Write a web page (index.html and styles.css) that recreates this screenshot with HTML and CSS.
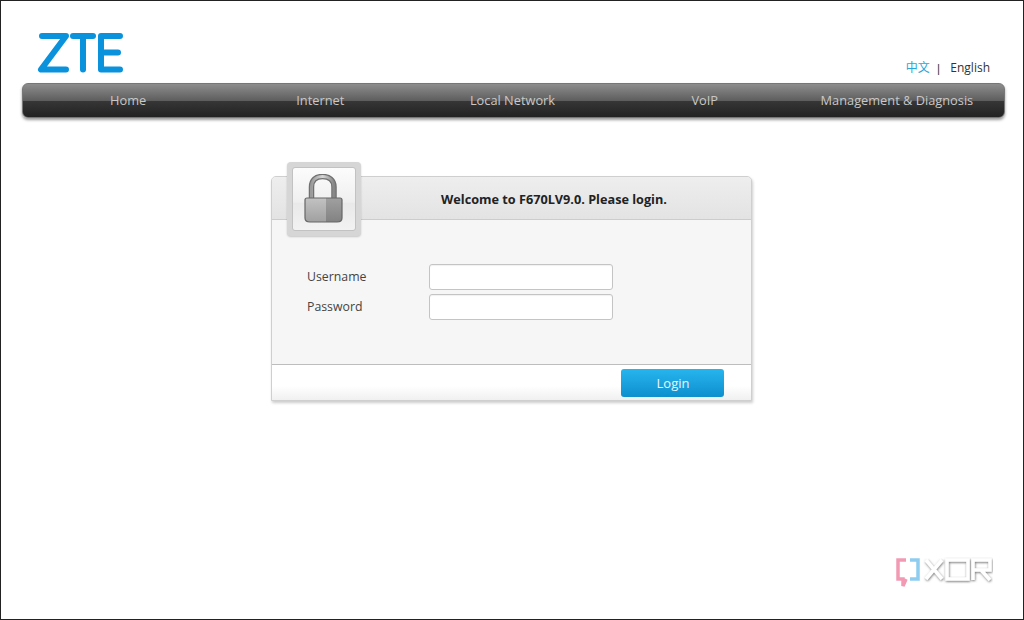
FILE: index.html
```html
<!DOCTYPE html>
<html lang="en">
<head>
<meta charset="UTF-8" />
<meta name="viewport" content="width=device-width, initial-scale=1" />
<title>F670LV9.0</title>
<link rel="stylesheet" href="styles.css">
</head>
<body>
  <div class="frame">
    <header class="top">
      <svg class="logo" width="90" height="44" viewBox="0 0 90 44" role="img" aria-label="ZTE">
        <g fill="none" stroke="#0a93dc" stroke-width="6" stroke-linecap="round" stroke-linejoin="round">
          <polyline points="6,5 30,5 5,38.500 30,38.500" />
          <line x1="37" y1="5" x2="57" y2="5" />
          <line x1="47" y1="5" x2="47" y2="38.500" />
          <polyline points="84,5 65,5 65,38.500 84,38.500" />
          <line x1="65" y1="21.500" x2="82" y2="21.500" />
        </g>
      </svg>
      <div class="lang">
        <a class="lang-cn" href="#">中文</a>
        <span class="lang-sep">|</span>
        <a class="lang-en" href="#">English</a>
      </div>
    </header>

    <nav class="menu">
      <a href="#">Home</a>
      <a href="#">Internet</a>
      <a href="#">Local Network</a>
      <a href="#">VoIP</a>
      <a href="#">Management &amp; Diagnosis</a>
    </nav>

    <main class="login">
      <div class="lockbox">
        <div class="lockbox-inner">
          <svg width="44" height="50" viewBox="0 0 44 50" aria-hidden="true">
            <defs>
              <linearGradient id="shackle" x1="0" y1="0" x2="1" y2="0">
                <stop offset="0" stop-color="#9a9a9a" />
                <stop offset="0.5" stop-color="#d6d6d6" />
                <stop offset="1" stop-color="#858585" />
              </linearGradient>
              <linearGradient id="bodyL" x1="0" y1="0" x2="0" y2="1">
                <stop offset="0" stop-color="#c2c2c2" />
                <stop offset="1" stop-color="#a0a0a0" />
              </linearGradient>
              <linearGradient id="bodyR" x1="0" y1="0" x2="0" y2="1">
                <stop offset="0" stop-color="#a0a0a0" />
                <stop offset="1" stop-color="#828282" />
              </linearGradient>
            </defs>
            <path d="M9.500 26V13C9.500 6 14 2.500 20.500 2.500S32 6 32 13V26" fill="none" stroke="#707070" stroke-width="5.500" />
            <path d="M9.500 26V13C9.500 6 14 2.500 20.500 2.500S32 6 32 13V26" fill="none" stroke="url(#shackle)" stroke-width="3" />
            <path d="M3 26C3 25 4 24 5 24H24V48H8C5 48 3 47 3 44Z" fill="url(#bodyL)" />
            <path d="M24 24H38C39 24 40 25 40 26V44C40 47 38 48 35 48H24Z" fill="url(#bodyR)" />
            <path d="M3 26C3 25 4 24 5 24H38C39 24 40 25 40 26V44C40 47 38 48 35 48H8C5 48 3 47 3 44Z" fill="none" stroke="#666" stroke-width="1.200" />
          </svg>
        </div>
      </div>
      <div class="login-head">Welcome to F670LV9.0. Please login.</div>
      <form class="login-body">
        <div class="row">
          <label for="username">Username</label>
          <input id="username" type="text">
        </div>
        <div class="row">
          <label for="password">Password</label>
          <input id="password" type="password">
        </div>
      </form>
      <div class="login-foot">
        <button type="button" class="btn">Login</button>
      </div>
    </main>

    <svg class="watermark" width="100" height="34" viewBox="0 0 100 34" role="img" aria-label="XDA">
      <defs>
        <filter id="wm" x="-10%" y="-30%" width="120%" height="170%">
          <feDropShadow dx="0.500" dy="1" stdDeviation="1.200" flood-color="#666" flood-opacity="0.900" />
        </filter>
      </defs>
      <g fill="none" stroke-width="3.500">
        <path d="M13 4H5V23H10V30L13 23" stroke="#f29ab4" />
        <path d="M17 4H25V23H17" stroke="#8fcdf0" />
        <g stroke="#fff" filter="url(#wm)">
          <path d="M33 4L49 23M49 4L33 23" />
          <path d="M54 4V23H75V4Z" />
          <path d="M80 24V4H97V14H81M88 14L97 24" />
        </g>
      </g>
    </svg>
  </div>
</body>
</html>
```

FILE: styles.css
```css
* {
  box-sizing: border-box;
}
html, body {
  margin: 0;
  padding: 0;
}
body {
  font-family: 'Open Sans', 'Noto Sans CJK SC', sans-serif;
  background: #fff;
  color: #333;
  overflow: hidden;
}
a {
  text-decoration: none;
}
.frame {
  position: relative;
  width: 1024px;
  height: 620px;
  border: 1px solid #222;
  background: #fff;
}
.top {
  height: 82px;
  padding: 30px 33px 0 35px;
  display: flex;
  justify-content: space-between;
  align-items: flex-start;
}
.logo {
  display: block;
}
.lang {
  margin-top: 28px;
  display: flex;
  align-items: center;
  font-size: 12px;
  line-height: 18px;
}
.lang-cn {
  color: #2aa5d8;
}
.lang-sep {
  margin: 0 9px 0 6px;
  font-size: 10px;
  font-weight: 600;
  color: #333;
}
.lang-en {
  color: #333;
}
.menu {
  margin: 0 18px 0 21px;
  height: 35px;
  padding: 0 11px 0 9px;
  display: grid;
  grid-template-columns: repeat(5, 1fr);
  border: 1px solid #777;
  border-radius: 6px;
  background: linear-gradient(#8d8d8d 0, #5e5e5e 50%, #363636 52%, #222 100%);
  box-shadow: 0 2px 3px rgb(0 0 0 / 0.4);
}
.menu a {
  color: #c8c8c8;
  font-size: 12.800px;
  line-height: 32px;
  text-align: center;
}
.login {
  position: relative;
  width: 481px;
  margin: 58px 0 0 270px;
  border: 1px solid #cfcfcf;
  border-radius: 5px 5px 0 0;
  box-shadow: 1px 2px 3px rgb(0 0 0 / 0.2);
  background: #f6f6f6;
}
.lockbox {
  position: absolute;
  left: 15px;
  top: -15px;
  width: 74px;
  height: 74px;
  padding: 5px;
  border-radius: 4px;
  background: #d6d6d6;
  box-shadow: 0 1px 2px rgb(0 0 0 / 0.2);
}
.lockbox-inner {
  height: 100%;
  display: flex;
  align-items: center;
  justify-content: center;
  border: 1px solid #c2c2c2;
  border-radius: 3px;
  background: linear-gradient(#fcfcfc, #efefef 55%, #e9e9e9 57%, #f2f2f2);
}
.login-head {
  height: 43px;
  padding-left: 85px;
  border-bottom: 1px solid #ccc;
  border-radius: 4px 4px 0 0;
  background: linear-gradient(#eeeeee, #e3e3e3);
  font-size: 12.700px;
  font-weight: 700;
  line-height: 45px;
  text-align: center;
  color: #222;
}
.login-body {
  height: 144px;
  padding: 44px 0 0 35px;
  display: flex;
  flex-direction: column;
  gap: 4px;
}
.row {
  display: flex;
  align-items: center;
}
.row label {
  width: 122px;
  font-size: 12.300px;
  line-height: 26px;
  color: #444;
}
.row input {
  width: 184px;
  height: 26px;
  border: 1px solid #c4c4c4;
  border-radius: 3px;
  background: #fff;
  box-shadow: inset 0 1px 1px rgb(0 0 0 / 0.06);
}
.login-foot {
  height: 36px;
  padding: 4px 27px 0 0;
  display: flex;
  justify-content: flex-end;
  align-items: flex-start;
  border-top: 1px solid #bdbdbd;
  background: linear-gradient(#fff 60%, #f0f0f0);
}
.btn {
  width: 103px;
  height: 28px;
  border: none;
  border-radius: 3px;
  background: linear-gradient(#27b5ee, #0e8fce);
  color: #eaf7fd;
  font-family: inherit;
  font-size: 13px;
  padding: 0 0 0 1px;
}
.watermark {
  position: absolute;
  left: 892px;
  top: 555px;
}
```
